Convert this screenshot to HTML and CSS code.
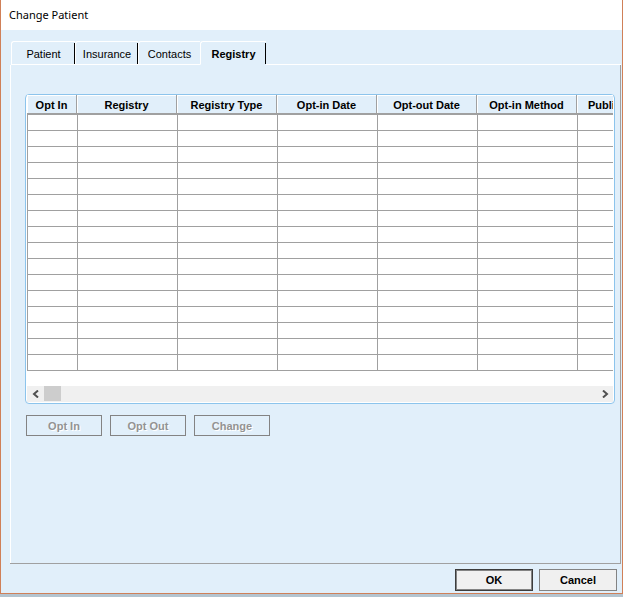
FILE: index.html
```html
<!DOCTYPE html>
<html lang="en">
<head>
<meta charset="utf-8">
<title>Change Patient</title>
<link rel="stylesheet" href="styles.css">
</head>
<body>
<main class="dialog">
  <h1 class="title">Change Patient</h1>
  <div class="content">
    <div class="tabs" role="tablist">
      <button class="tab tab-patient" role="tab">Patient</button>
      <button class="tab" role="tab">Insurance</button>
      <button class="tab tab-contacts" role="tab">Contacts</button>
      <button class="tab tab-active" role="tab" aria-selected="true">Registry</button>
      <span class="tab-line"></span>
    </div>
    <section class="panel">
      <div class="grid">
        <div class="viewport">
          <table>
            <colgroup><col class="narrow"><col><col><col><col><col><col></colgroup>
            <thead>
              <tr><th>Opt In</th><th>Registry</th><th>Registry Type</th><th>Opt-in Date</th><th>Opt-out Date</th><th>Opt-in Method</th><th class="clipped">Publi</th></tr>
            </thead>
            <tbody>
              <tr><td></td><td></td><td></td><td></td><td></td><td></td><td></td></tr>
              <tr><td></td><td></td><td></td><td></td><td></td><td></td><td></td></tr>
              <tr><td></td><td></td><td></td><td></td><td></td><td></td><td></td></tr>
              <tr><td></td><td></td><td></td><td></td><td></td><td></td><td></td></tr>
              <tr><td></td><td></td><td></td><td></td><td></td><td></td><td></td></tr>
              <tr><td></td><td></td><td></td><td></td><td></td><td></td><td></td></tr>
              <tr><td></td><td></td><td></td><td></td><td></td><td></td><td></td></tr>
              <tr><td></td><td></td><td></td><td></td><td></td><td></td><td></td></tr>
              <tr><td></td><td></td><td></td><td></td><td></td><td></td><td></td></tr>
              <tr><td></td><td></td><td></td><td></td><td></td><td></td><td></td></tr>
              <tr><td></td><td></td><td></td><td></td><td></td><td></td><td></td></tr>
              <tr><td></td><td></td><td></td><td></td><td></td><td></td><td></td></tr>
              <tr><td></td><td></td><td></td><td></td><td></td><td></td><td></td></tr>
              <tr><td></td><td></td><td></td><td></td><td></td><td></td><td></td></tr>
              <tr><td></td><td></td><td></td><td></td><td></td><td></td><td></td></tr>
              <tr><td></td><td></td><td></td><td></td><td></td><td></td><td></td></tr>
            </tbody>
          </table>
        </div>
        <div class="scrollbar">
          <button class="arrow" aria-label="Scroll left"><svg width="8" height="8" viewBox="0 0 8 8"><path d="M6 0.5 2 4 6 7.5"/></svg></button>
          <span class="thumb"></span>
          <button class="arrow arrow-right" aria-label="Scroll right"><svg width="8" height="8" viewBox="0 0 8 8"><path d="M2 0.5 6 4 2 7.5"/></svg></button>
        </div>
      </div>
      <div class="actions">
        <button class="action" disabled>Opt In</button>
        <button class="action" disabled>Opt Out</button>
        <button class="action" disabled>Change</button>
      </div>
    </section>
  </div>
  <footer class="footer">
    <button class="button button-default">OK</button>
    <button class="button">Cancel</button>
  </footer>
</main>
</body>
</html>
```
FILE: styles.css
```css
* {
  box-sizing: border-box;
}

body {
  margin: 0;
  min-height: 100vh;
  padding-bottom: 3px;
  display: flex;
  background: #b4c4cf;
  color: #000;
  font: 11px/14px "Liberation Sans", Arial, sans-serif;
}

button {
  margin: 0;
  padding: 0;
  border: 0;
  background: none;
  color: inherit;
  font: inherit;
}

.dialog {
  flex: 1;
  min-width: 0;
  display: flex;
  flex-direction: column;
  border: 1px solid #d08058;
  border-top: 0;
  background: #e1effa;
}

.title {
  margin: 0;
  height: 30px;
  padding-left: 8px;
  background: #fff;
  font: 11px/30px "Noto Sans", "Open Sans", sans-serif;
}

.content {
  flex: 1;
  display: flex;
  flex-direction: column;
  padding: 11px 1px 0 9px;
}

.tabs {
  display: flex;
  height: 24px;
  padding-left: 1px;
}

.tab {
  width: 63px;
  padding-top: 2px;
  border: solid #fff;
  border-width: 1px 0 1px 1px;
  border-radius: 3px 0 0 0;
  background: linear-gradient(#000, #000) right bottom / 1px 21px no-repeat;
}

.tab-patient {
  width: 64px;
}

.tab-contacts {
  width: 62px;
  background: none;
}

.tab.tab-active {
  width: 66px;
  border-bottom-color: transparent;
  font-weight: bold;
}

.tab-line {
  flex: 1;
  border-bottom: 1px solid #fff;
}

.panel {
  flex: 1;
  border: solid #a0a0a0;
  border-width: 0 1px 1px 0;
  box-shadow: inset 1px 0 #fff;
  padding: 29px 5px 0 15px;
}

.grid {
  border: 1px solid #8cc4ec;
  border-radius: 4px;
  padding: 0 1px 1px;
  background: #fff;
}

.viewport {
  overflow: hidden;
  padding-bottom: 15px;
}

table {
  width: 650px;
  table-layout: fixed;
  border-collapse: separate;
  border-spacing: 0;
}

.narrow {
  width: 50px;
}

th {
  height: 20px;
  padding: 2px 0 0;
  border: solid #a0a0a0;
  border-width: 0 1px 2px 0;
  background: #e1effa;
  box-shadow: inset 1px 1px #fff;
  line-height: 16px;
  white-space: nowrap;
}

.clipped {
  padding-left: 11px;
  text-align: left;
}

td {
  height: 16px;
  padding: 0;
  border: solid #a0a0a0;
  border-width: 0 0 1px 1px;
}

.scrollbar {
  display: flex;
  height: 16px;
  background: #f0f0f0;
}

.arrow {
  display: flex;
  width: 17px;
  align-items: center;
  justify-content: center;
}

.arrow-right {
  margin-left: auto;
}

.arrow path {
  fill: none;
  stroke: #505050;
  stroke-width: 2;
}

.thumb {
  width: 17px;
  height: 15px;
  background: #cdcdcd;
}

.actions {
  display: flex;
  gap: 8px;
  margin-top: 11px;
  padding-left: 1px;
}

.action {
  width: 76px;
  height: 21px;
  border: 1px solid #838383;
  color: #939393;
  font-weight: bold;
  text-shadow: 1px 1px #fff;
}

.footer {
  display: flex;
  justify-content: flex-end;
  gap: 6px;
  padding: 5px 5px 2px;
}

.button {
  width: 78px;
  height: 22px;
  border: 1px solid #838383;
  background: #f0f0f0;
  font-weight: bold;
}

.button-default {
  border-color: #3c3c3c;
  box-shadow: inset 0 0 0 1px #838383;
}
```
